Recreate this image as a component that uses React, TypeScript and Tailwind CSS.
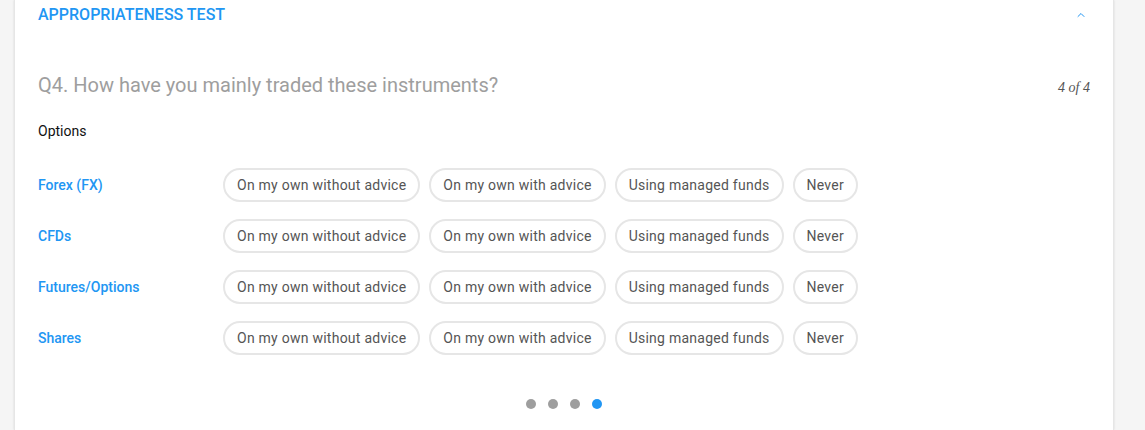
import { ChevronUp } from 'lucide-react';

const instruments = ['Forex (FX)', 'CFDs', 'Futures/Options', 'Shares'];
const answers = ['On my own without advice', 'On my own with advice', 'Using managed funds', 'Never'];

export default function App() {
  return (
    <div className="h-[430px] overflow-hidden bg-[#f5f5f5] pl-[14px] font-['Roboto',sans-serif]">
      <div className="flex h-full w-[1100px] flex-col border-x border-[#e6e6e6] bg-white px-[23px] shadow-[0_0_2px_rgba(0,0,0,0.12)]">
        {/* Header */}
        <div className="flex h-[29px] items-center justify-between">
          <span className="text-[16px] font-medium uppercase text-[#2196f3]">Appropriateness test</span>
          <ChevronUp className="mr-[3px] h-[12px] w-[12px] text-[#2196f3]" strokeWidth={2} />
        </div>

        {/* Question */}
        <div className="mt-[42px] flex items-center justify-between">
          <h2 className="text-[20px] leading-[28px] text-[#9e9e9e]">
            Q4. How have you mainly traded these instruments?
          </h2>
          <span className="mt-[4px] font-['Liberation_Serif',serif] text-[14px] italic text-[#555]">4 of 4</span>
        </div>

        <div className="mt-[22px] text-[14px] leading-[20px] text-[#111]">Options</div>

        {/* Rows */}
        <div className="mt-[27px] flex flex-col gap-[17px]">
          {instruments.map((name) => (
            <div key={name} className="flex items-center">
              <span className="w-[185px] text-[14px] font-medium text-[#2196f3]">{name}</span>
              <div className="flex gap-[9px]">
                {answers.map((a) => (
                  <button
                    key={a}
                    className="h-[34px] rounded-full border-2 border-[#e6e6e6] bg-white px-3 text-[14px] tracking-[0.25px] text-[#555]"
                  >
                    {a}
                  </button>
                ))}
              </div>
            </div>
          ))}
        </div>

        {/* Pager */}
        <div className="mt-[44px] flex justify-center gap-[12px]">
          <span className="h-[10px] w-[10px] rounded-full bg-[#9e9e9e]" />
          <span className="h-[10px] w-[10px] rounded-full bg-[#9e9e9e]" />
          <span className="h-[10px] w-[10px] rounded-full bg-[#9e9e9e]" />
          <span className="h-[10px] w-[10px] rounded-full bg-[#2196f3]" />
        </div>
      </div>
    </div>
  );
}
